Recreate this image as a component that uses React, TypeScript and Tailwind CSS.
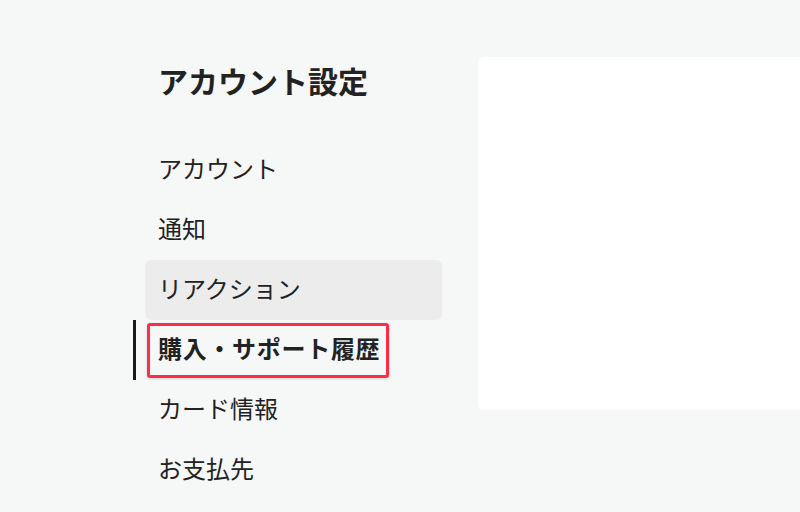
const FONT = "font-['Noto_Sans_CJK_JP','Noto_Sans',sans-serif]";

const ITEMS = [
  { label: 'アカウント' },
  { label: '通知' },
  { label: 'リアクション', hover: true },
  { label: '購入・サポート履歴', active: true },
  { label: 'カード情報' },
  { label: 'お支払先' },
];

function NavItem({
  label,
  hover,
  active,
}: {
  label: string;
  hover?: boolean;
  active?: boolean;
}) {
  if (active) {
    return (
      <li className="relative flex h-[60px] items-center">
        <span className="absolute -left-[12px] top-0 h-full w-[3px] bg-[#1a1a1a]" />
        <span className="ml-[2px] flex h-[55px] items-center rounded-[3px] border-[3px] border-[#ff2d48] pb-[4px] pl-[8px] pr-[6px] text-[24px] font-bold tracking-[0.7px] text-[#222] shadow-[0_1px_3px_rgba(0,0,0,0.15)]">
          {label}
        </span>
      </li>
    );
  }
  return (
    <li
      className={`flex h-[60px] items-center rounded-[6px] pb-[5px] pl-[13px] text-[24px] text-[#222] ${
        hover ? 'bg-[#ebeceb]' : ''
      }`}
    >
      {label}
    </li>
  );
}

export default function App() {
  return (
    <div className={`${FONT} flex h-[512px] w-[800px] overflow-hidden bg-[#f6f7f7] pl-[145px] pt-[57px]`}>
      <aside className="w-[297px] shrink-0">
        <h1 className="flex h-[46px] items-center pl-[13px] text-[30px] font-bold text-[#222]">
          アカウント設定
        </h1>
        <ul className="mt-[37px]">
          {ITEMS.map((item) => (
            <NavItem key={item.label} {...item} />
          ))}
        </ul>
      </aside>
      <main className="ml-[36px] h-[353px] flex-1 rounded-l-[6px] bg-white" />
    </div>
  );
}
